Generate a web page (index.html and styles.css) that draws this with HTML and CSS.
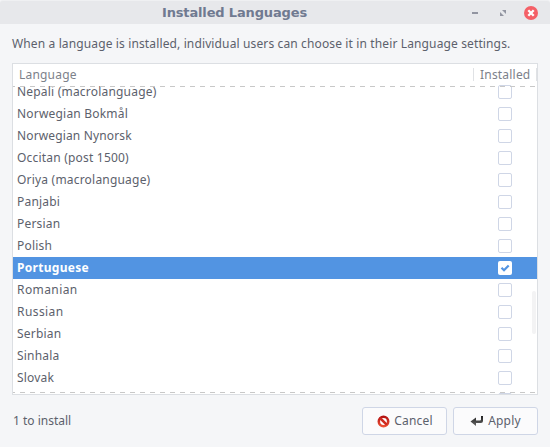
FILE: index.html
```html
<!DOCTYPE html>
<html lang="en">
<head>
<meta charset="utf-8">
<title>Installed Languages</title>
<link rel="stylesheet" href="styles.css">
</head>
<body>
<div class="window">
  <header class="titlebar">
    <h1 class="title">Installed Languages</h1>
    <div class="controls">
      <svg width="14" height="14" viewBox="0 0 14 14"><rect x="4" y="6" width="6" height="2" fill="#9295a1"/></svg>
      <svg width="14" height="14" viewBox="0 0 14 14"><path d="M6 4h4v4zM4 6v4h4z" fill="#9295a1"/></svg>
      <svg width="14" height="14" viewBox="0 0 14 14"><circle cx="7" cy="7" r="7" fill="#f46067"/><path d="M4.300 4.300l5.400 5.400M9.700 4.300l-5.400 5.400" stroke="#fff" stroke-width="2.300"/></svg>
    </div>
  </header>
  <p class="intro">When a language is installed, individual users can choose it in their Language settings.</p>
  <div class="list">
    <div class="head"><span class="col-name">Language</span><span class="col-installed">Installed</span></div>
    <div class="viewport">
      <div class="rows">
        <div class="row"><span>Nepali (macrolanguage)</span><i class="check"></i></div>
        <div class="row"><span>Norwegian Bokmål</span><i class="check"></i></div>
        <div class="row"><span class="tight">Norwegian Nynorsk</span><i class="check"></i></div>
        <div class="row"><span>Occitan (post 1500)</span><i class="check"></i></div>
        <div class="row"><span>Oriya (macrolanguage)</span><i class="check"></i></div>
        <div class="row"><span>Panjabi</span><i class="check"></i></div>
        <div class="row"><span>Persian</span><i class="check"></i></div>
        <div class="row"><span>Polish</span><i class="check"></i></div>
        <div class="row selected"><span>Portuguese</span><i class="check"><svg width="14" height="14" viewBox="0 0 14 14"><path d="M3.500 6.800l2.500 2.500L10.700 4.400" fill="none" stroke="#5294e2" stroke-width="2.200"/></svg></i></div>
        <div class="row"><span class="loose">Romanian</span><i class="check"></i></div>
        <div class="row"><span class="loose">Russian</span><i class="check"></i></div>
        <div class="row"><span>Serbian</span><i class="check"></i></div>
        <div class="row"><span>Sinhala</span><i class="check"></i></div>
        <div class="row"><span>Slovak</span><i class="check"></i></div>
        <div class="row"><span></span><i class="check"></i></div>
      </div>
      <div class="dash dash-top"></div>
      <div class="dash dash-bottom"></div>
      <div class="scrollbar"></div>
    </div>
  </div>
  <footer class="footer">
    <span class="status">1 to install</span>
    <button class="button cancel"><svg width="13" height="13" viewBox="0 0 13 13"><defs><linearGradient id="red" x2="0" y2="1"><stop stop-color="#b51414"/><stop offset="1" stop-color="#ed5136"/></linearGradient></defs><circle cx="6.5" cy="6.5" r="4.7" fill="#fff" stroke="url(#red)" stroke-width="2.6"/><path d="M3.1 3.1l6.8 6.8" stroke="#d02b20" stroke-width="2.6"/></svg><span>Cancel</span></button>
    <button class="button apply"><svg width="14" height="12" viewBox="0 0 14 12"><defs><linearGradient id="dark" x2="0" y2="1"><stop stop-color="#222"/><stop offset="1" stop-color="#666"/></linearGradient></defs><path d="M11 1h2v5q0 2-2 2H6v3L.5 6.500 6 2.500V5.500h4q1 0 1-1z" fill="url(#dark)"/></svg><span>Apply</span></button>
  </footer>
</div>
</body>
</html>
```
FILE: styles.css
```css
* { box-sizing: border-box; }
body {
  margin: 0;
  background: #f5f6f8;
  color: #5c616c;
  font: 12px/22px "Noto Sans", "Open Sans", sans-serif;
  letter-spacing: 0.2px;
}
.window { width: 550px; height: 447px; overflow: hidden; }
.titlebar {
  height: 24px;
  display: grid;
  grid-template-columns: 81px 307px 1fr;
  align-items: center;
  background: #e7e8eb;
  border-top: 1px solid #eff0f2;
  border-radius: 3px 3px 0 0;
}
.title {
  grid-column: 2;
  margin: 0;
  text-align: center;
  font: bold 13px/22px "DejaVu Sans", sans-serif;
  color: #707a91;
  letter-spacing: -0.15px;
}
.controls { display: flex; gap: 14px; justify-content: flex-end; padding-right: 12px; }
.intro { margin: 9px 12px 8px; height: 22px; white-space: nowrap; letter-spacing: 0.13px; }
.list {
  margin: 0 12px;
  width: 526px;
  height: 332px;
  background: #fff;
  border: 1px solid #dcdfe3;
}
.head { height: 21px; display: flex; align-items: center; color: #7c818a; }
.col-name { flex: 1; padding-left: 6px; }
.col-installed {
  width: 64px;
  height: 13px;
  line-height: 14px;
  padding-left: 6px;
  border-left: 1px solid #e0e2e5;
  border-right: 1px solid #e0e2e5;
}
.viewport { position: relative; height: 309px; overflow: hidden; }
.rows { margin-top: -4px; }
.row { height: 22px; display: flex; align-items: center; justify-content: space-between; padding: 0 25px 0 4px; }
.tight { letter-spacing: 0.14px; }
.loose { letter-spacing: 0.42px; }
.check { width: 14px; height: 14px; border: 1px solid #cfd6e6; border-radius: 2px; background: #fff; display: block; }
.selected { background: #5294e2; color: #fff; font-weight: bold; letter-spacing: 0.3px; }
.selected .check { border: 0; }
.check svg { display: block; }
.dash {
  position: absolute;
  left: 0;
  right: 0;
  height: 1px;
  background: repeating-linear-gradient(90deg, #c8c8c8 0 2px, transparent 2px 7px, #c8c8c8 7px 10px);
}
.dash-top { top: 1px; }
.dash-bottom { bottom: 1px; }
.scrollbar { position: absolute; right: 1px; top: 206px; width: 4px; height: 43px; border-radius: 2px; background: #f3f3f4; }
.footer { display: flex; align-items: center; margin: 12px 12px 0; height: 28px; }
.status { flex: 1; padding-left: 1px; letter-spacing: 0; }
.button {
  width: 85px;
  height: 28px;
  margin-left: 6px;
  padding: 0;
  display: flex;
  align-items: center;
  justify-content: center;
  gap: 4px;
  border: 1px solid #cfd6e6;
  border-radius: 3px;
  background: #fbfbfc;
  color: #5c616c;
  font: inherit;
  letter-spacing: inherit;
}
.cancel { padding-left: 1px; }
```
